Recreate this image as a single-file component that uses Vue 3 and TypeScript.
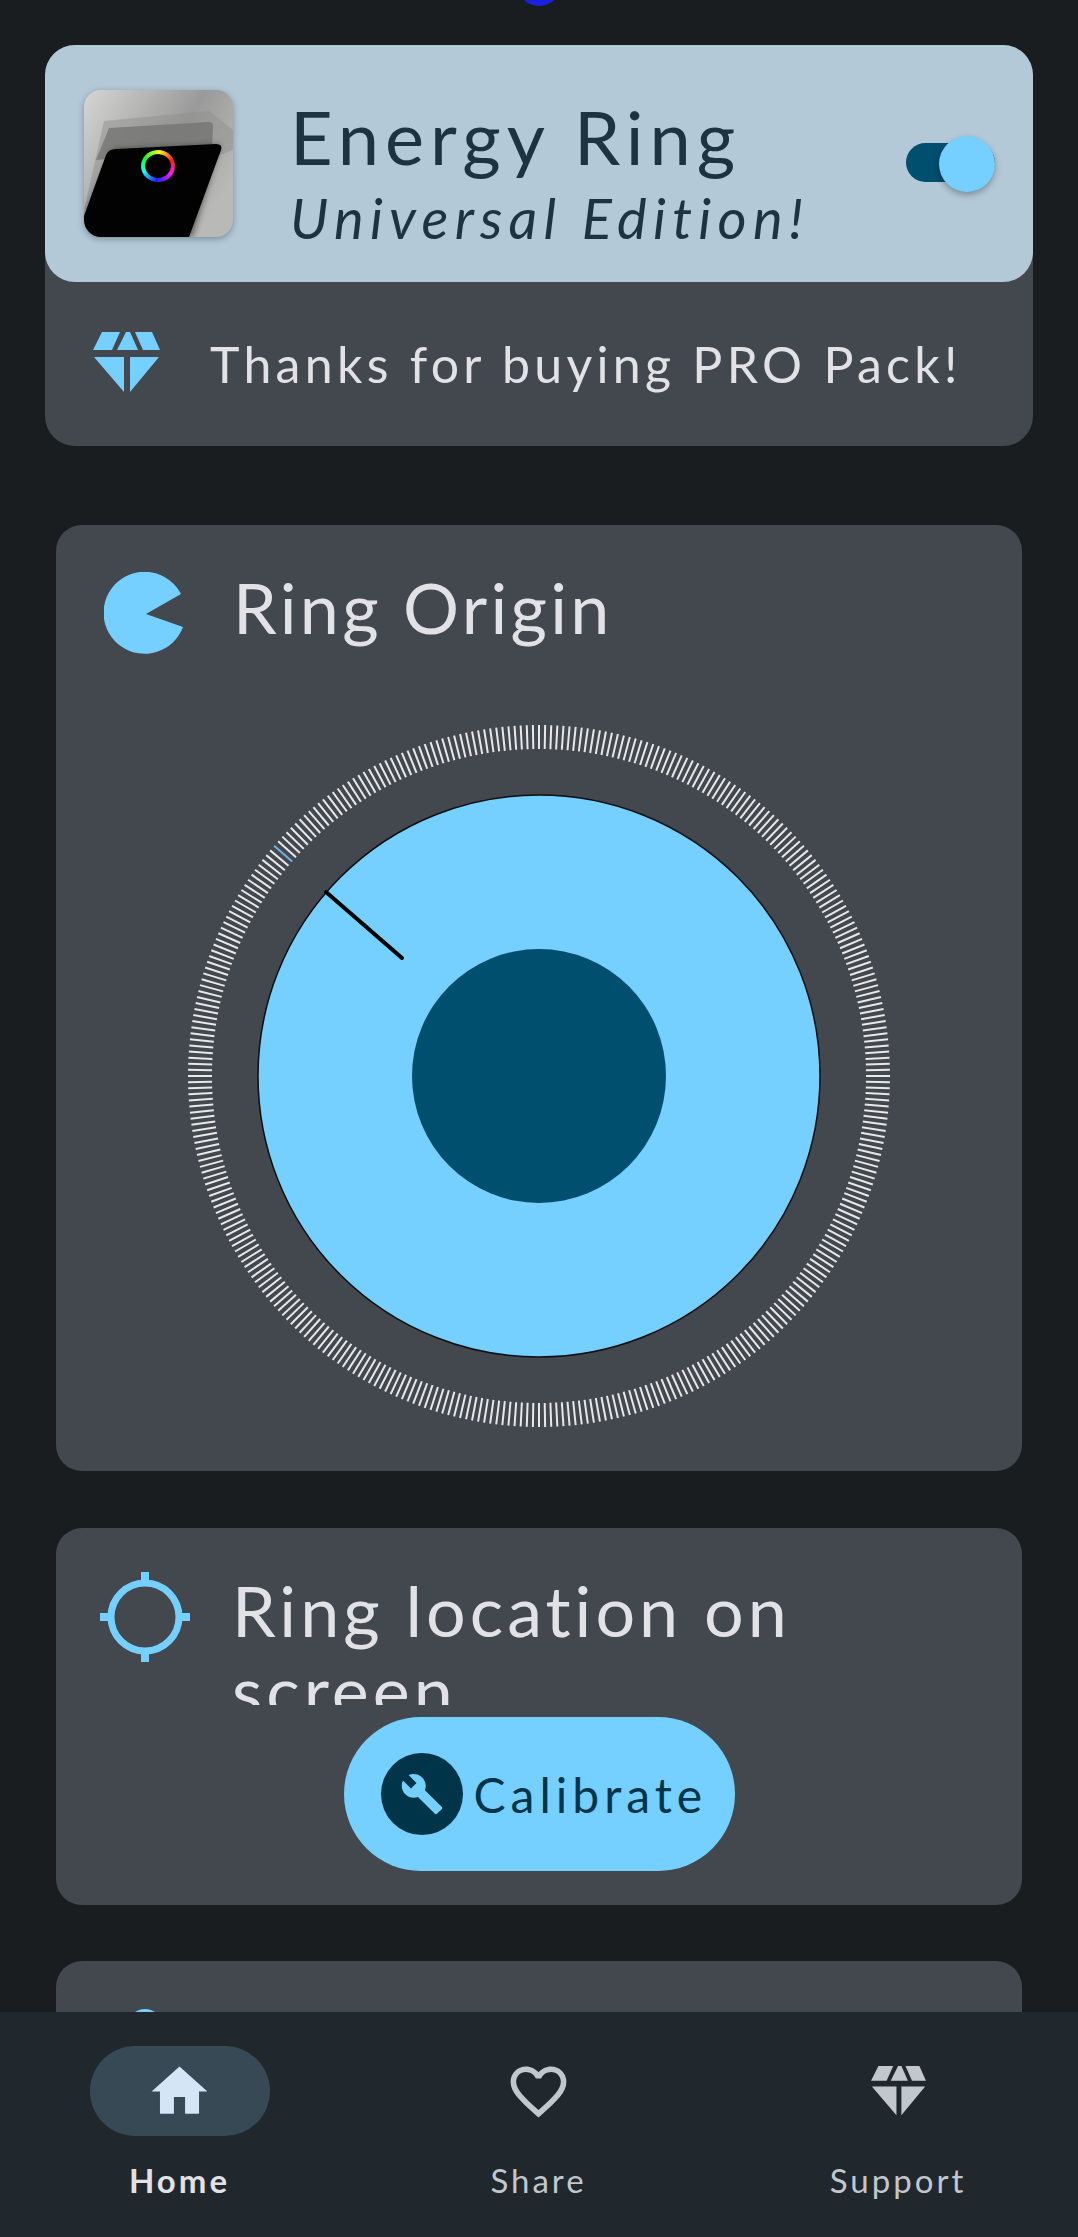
<template>
  <div class="screen">
    <div class="cutout"></div>

    <section class="top-card">
      <div class="hero">
        <svg class="app-icon" viewBox="0 0 149 147" width="149" height="147">
          <defs>
            <linearGradient id="iconBg" x1="0" y1="0" x2="1" y2="0.6">
              <stop offset="0" stop-color="#d6d6d4" />
              <stop offset="0.6" stop-color="#9a9a9a" />
              <stop offset="1" stop-color="#b9b9b7" />
            </linearGradient>
            <filter id="soft" x="-20%" y="-20%" width="140%" height="140%">
              <feGaussianBlur stdDeviation="3" />
            </filter>
            <filter id="glow" x="-30%" y="-30%" width="160%" height="160%">
              <feGaussianBlur stdDeviation="0.7" />
            </filter>
            <clipPath id="iconClip">
              <rect width="149" height="147" rx="17" />
            </clipPath>
          </defs>
          <g clip-path="url(#iconClip)">
            <rect width="149" height="147" fill="url(#iconBg)" />
            <path d="M20 31 L125 21 L149 40 V60 L0 120 Z" fill="#8f8f8e" opacity="0.5" />
            <path d="M25 38 L125 32 Q129 32 129 36 L128 60 L12 70 Z" fill="#747473" opacity="0.8" />
            <path d="M29 60 L136 55 L108 147 L4 147 L0 126 Z" fill="#000" opacity="0.5" filter="url(#soft)" />
            <path d="M33 59 L132 54 Q139 54 137 60 L105 147 L12 147 Q0 147 0 135 L0 126 L22 65 Q24 59 33 59 Z" fill="#020202" />
          </g>
          <g filter="url(#glow)">
            <path
              v-for="seg in ringSegments"
              :key="seg.key"
              :d="seg.d"
              :stroke="seg.color"
              stroke-width="4"
              fill="none"
            />
          </g>
        </svg>
        <div class="hero-text">
          <div class="hero-title">Energy Ring</div>
          <div class="hero-sub">Universal Edition!</div>
        </div>
        <div class="toggle">
          <div class="toggle-thumb"></div>
        </div>
      </div>
      <div class="thanks">
        <svg class="gem" viewBox="0 0 67 61" width="67" height="61">
          <path :d="gemPath" fill="#75d0ff" />
        </svg>
        <span>Thanks for buying PRO Pack!</span>
      </div>
    </section>

    <section class="card origin-card">
      <div class="card-head">
        <svg class="head-icon" viewBox="0 0 84 84" width="84" height="84">
          <path d="M77 22 A41 41 0 1 0 79 55 L42 42 Z" fill="#75d0ff" />
        </svg>
        <h2 class="card-title">Ring Origin</h2>
      </div>
      <svg class="dial" viewBox="-352 -352 704 704" width="704" height="704">
        <line
          v-for="tick in ticks"
          :key="tick.i"
          :x1="tick.x1"
          :y1="tick.y1"
          :x2="tick.x2"
          :y2="tick.y2"
          :stroke="tick.i === 221 ? '#6fb4dc' : '#e8e8ea'"
          stroke-width="2"
        />
        <circle r="281" fill="#75d0ff" stroke="#0b0f12" stroke-width="1.5" />
        <circle r="127" fill="#004f6e" />
        <line x1="-213" y1="-184" x2="-137" y2="-118" stroke="#000" stroke-width="4" stroke-linecap="round" />
      </svg>
    </section>

    <section class="card location-card">
      <div class="card-head">
        <svg class="head-icon cross" viewBox="0 0 90 90" width="90" height="90">
          <circle cx="45" cy="45" r="34" fill="none" stroke="#75d0ff" stroke-width="7" />
          <path d="M41 0h8v12h-8zM41 78h8v12h-8zM0 41h12v8H0zM78 41h12v8H78z" fill="#75d0ff" />
        </svg>
        <h2 class="card-title clipped">Ring location on screen</h2>
      </div>
      <div class="calibrate">
        <span class="calibrate-icon">
          <svg viewBox="0 0 24 24" width="44" height="44">
            <path :d="wrenchPath" fill="#75d0ff" />
          </svg>
        </span>
        <span>Calibrate</span>
      </div>
    </section>

    <section class="card peek-card">
      <div class="peek-dot"></div>
    </section>

    <nav class="bottom-nav">
      <div v-for="item in navItems" :key="item.label" class="nav-item" :class="{ active: item.active }">
        <div class="nav-pill">
          <svg :viewBox="item.box" :width="item.w" :height="item.h">
            <path :d="item.path" fill="currentColor" />
          </svg>
        </div>
        <div class="nav-label">{{ item.label }}</div>
      </div>
    </nav>
  </div>
</template>

<script setup lang="ts">
const gemPath =
  'M9 0h18l-8 18H0zM33 0h4l8 18H24zM42 0h17l8 18H50zM1 25h30v35zM37 25h29L37 60z'
const wrenchPath =
  'M22.7 19l-9.1-9.1c.9-2.3.4-5-1.5-6.9-2-2-5-2.4-7.4-1.3L9 6 6 9 1.6 4.7C.4 7.1.9 10.1 2.9 12.1c1.9 1.9 4.6 2.4 6.9 1.5l9.1 9.1c.4.4 1 .4 1.4 0l2.3-2.3c.5-.4.5-1.1.1-1.4z'

const navItems = [
  { label: 'Home', active: true, box: '0 0 24 24', w: 67, h: 67, path: 'M10 20v-6h4v6h5v-8h3L12 3 2 12h3v8z' },
  {
    label: 'Share',
    active: false,
    box: '0 0 24 24',
    w: 67,
    h: 67,
    path: 'M16.5 3c-1.74 0-3.41.81-4.5 2.09C10.91 3.81 9.24 3 7.5 3 4.42 3 2 5.42 2 8.5c0 3.78 3.4 6.86 8.55 11.54L12 21.35l1.45-1.32C18.6 15.36 22 12.28 22 8.5 22 5.42 19.58 3 16.5 3zm-4.4 15.55l-.1.1-.1-.1C7.14 14.24 4 11.39 4 8.5 4 6.5 5.5 5 7.5 5c1.54 0 3.04.99 3.57 2.36h1.87C13.46 5.99 14.96 5 16.5 5c2 0 3.5 1.5 3.5 3.5 0 2.89-3.14 5.74-7.9 10.05z',
  },
  { label: 'Support', active: false, box: '0 0 67 61', w: 55, h: 50, path: gemPath },
]

const ticks = Array.from({ length: 360 }, (_, i) => {
  const a = (i * Math.PI) / 180
  const c = Math.cos(a)
  const s = Math.sin(a)
  return { i, x1: c * 327, y1: s * 327, x2: c * 351, y2: s * 351 }
})

// rainbow ring on the app icon: yellow on top, green left, blue at the bottom
const ringSegments = Array.from({ length: 36 }, (_, i) => {
  const a0 = (i * 10 * Math.PI) / 180
  const a1 = ((i + 1.3) * 10 * Math.PI) / 180
  const pt = (a: number) => `${(74 + Math.cos(a) * 15).toFixed(2)} ${(76 + Math.sin(a) * 14).toFixed(2)}`
  return { key: i, d: `M${pt(a0)} L${pt(a1)}`, color: `hsl(${(330 - i * 10 + 360) % 360}, 95%, 55%)` }
})
</script>

<style>
html,
body {
  margin: 0;
  background: #191d20;
}
</style>

<style scoped>
.screen {
  position: relative;
  width: 1078px;
  height: 2237px;
  overflow: hidden;
  background: #191d20;
  box-sizing: border-box;
  padding-top: 45px;
  font-family: "Lato", "Open Sans", sans-serif;
}

.cutout {
  position: absolute;
  left: 517px;
  top: -38px;
  width: 44px;
  height: 44px;
  border-radius: 50%;
  background: #1a22e0;
}

.top-card {
  margin: 0 45px;
  background: #42484e;
  border-radius: 30px;
  height: 401px;
}

.hero {
  display: flex;
  align-items: center;
  height: 237px;
  box-sizing: border-box;
  padding: 0 38px 0 39px;
  background: #b3c9d8;
  border-radius: 30px;
  color: #1d3342;
}

.app-icon {
  flex: none;
  filter: drop-shadow(0 2px 3px rgba(0, 0, 0, 0.3));
}

.hero-text {
  flex: 1;
  margin-left: 57px;
  margin-top: 16px;
}

.hero-title {
  font-size: 74px;
  line-height: 84px;
  letter-spacing: 6px;
}

.hero-sub {
  margin-top: 8px;
  font-size: 56px;
  line-height: 62px;
  font-style: italic;
  letter-spacing: 6.3px;
  white-space: nowrap;
}

.toggle {
  position: relative;
  flex: none;
  width: 89px;
  height: 39px;
  margin-top: -2px;
  border-radius: 20px;
  background: #004f6e;
}

.toggle-thumb {
  position: absolute;
  right: 0;
  top: -7px;
  width: 56px;
  height: 56px;
  border-radius: 50%;
  background: #75d0ff;
  box-shadow: 0 3px 6px rgba(0, 0, 0, 0.3);
}

.thanks {
  display: flex;
  align-items: center;
  height: 164px;
  box-sizing: border-box;
  padding-left: 48px;
  gap: 50px;
  color: #e2e2e6;
  font-size: 50px;
  letter-spacing: 4.3px;
}

.gem {
  flex: none;
  margin-top: -3px;
}

.card {
  margin: 0 56px;
  background: #42484e;
  border-radius: 26px;
  box-sizing: border-box;
}

.origin-card {
  margin-top: 79px;
  height: 946px;
  padding-top: 47px;
}

.card-head {
  display: flex;
  align-items: flex-start;
  padding-left: 48px;
  gap: 45px;
}

.head-icon {
  flex: none;
}

.card-title {
  margin: -5px 0 0;
  font-size: 70px;
  line-height: 80px;
  font-weight: 400;
  letter-spacing: 3.3px;
  color: #e2e2e6;
}

.dial {
  display: block;
  margin: 68px auto 0;
}

.location-card {
  position: relative;
  margin-top: 57px;
  height: 377px;
  padding-top: 44px;
}

.location-card .card-head {
  padding-left: 44px;
  gap: 42px;
}

.clipped {
  margin-top: -2px;
  height: 135px;
  overflow: hidden;
  width: 640px;
  letter-spacing: 4px;
}

.calibrate {
  display: flex;
  align-items: center;
  gap: 11px;
  width: 391px;
  height: 154px;
  box-sizing: border-box;
  margin: 12px auto 0;
  padding-left: 37px;
  border-radius: 77px;
  background: #75d0ff;
  color: #003549;
  font-size: 48px;
  letter-spacing: 5px;
}

.calibrate-icon {
  display: flex;
  align-items: center;
  justify-content: center;
  width: 82px;
  height: 82px;
  border-radius: 50%;
  background: #003549;
}

.peek-card {
  position: relative;
  margin-top: 56px;
  height: 200px;
}

.peek-dot {
  position: absolute;
  left: 72px;
  top: 48px;
  width: 34px;
  height: 34px;
  border-radius: 50%;
  background: #75d0ff;
}

.bottom-nav {
  position: absolute;
  left: 0;
  right: 0;
  bottom: 0;
  height: 225px;
  display: grid;
  grid-template-columns: 359px 359px 360px;
  background: #20282e;
  box-sizing: border-box;
  padding-top: 34px;
  color: #c2c7ce;
}

.nav-item {
  display: flex;
  flex-direction: column;
  align-items: center;
}

.nav-pill {
  display: flex;
  align-items: center;
  justify-content: center;
  width: 180px;
  height: 90px;
  border-radius: 45px;
}

.nav-label {
  margin-top: 24px;
  font-size: 33px;
  line-height: 40px;
  letter-spacing: 3px;
}

.nav-item.active .nav-pill {
  background: #374955;
  color: #d4e5f5;
}

.nav-item.active .nav-label {
  color: #e2e2e6;
  font-weight: 700;
}
</style>
